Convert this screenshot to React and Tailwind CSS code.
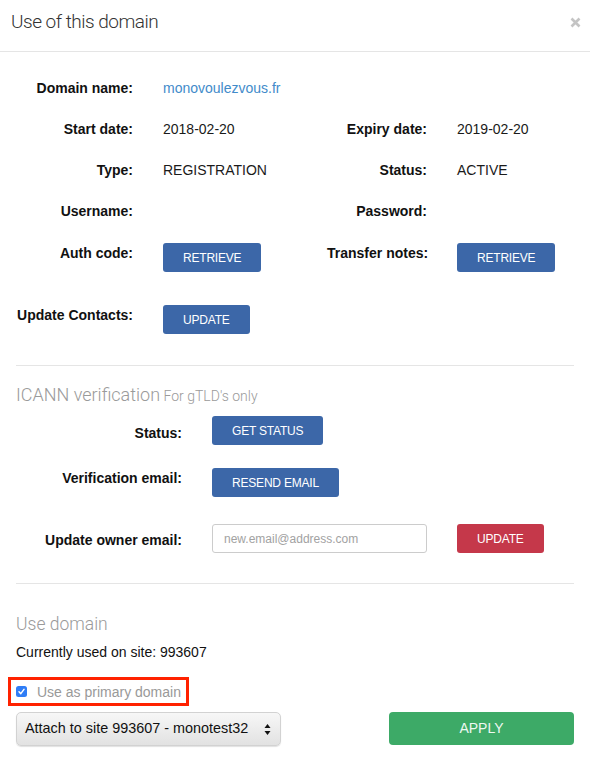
import React from "react";

function Btn({ children, color = "bg-[#3c67a8]" }) {
  return (
    <button
      type="button"
      className={`${color} h-[29px] px-[20px] rounded-[3px] text-white text-[12px] tracking-[-0.2px] leading-none font-['Liberation_Sans',Arial,sans-serif]`}
    >
      {children}
    </button>
  );
}

function Label({ children, className = "" }) {
  return (
    <div className={`text-right font-bold leading-[20px] text-[#111] ${className}`}>{children}</div>
  );
}

export default function App() {
  return (
    <div className="w-[590px] h-[760px] overflow-hidden bg-white text-[14px] text-[#1a1a1a] font-['Liberation_Sans',Arial,sans-serif]">
      {/* Header */}
      <div className="h-[52px] border-b border-[#e5e5e5] flex justify-between items-start pl-[11px] pr-[9px]">
        <div className="pt-[11px] leading-[22px] text-[19px] font-light tracking-[-0.5px] text-[#333] font-['Roboto',sans-serif]">
          Use of this domain
        </div>
        <svg className="mt-[17px]" width="11" height="11" viewBox="0 0 11 11">
          <path d="M1.5 1.5 L9.5 9.5 M9.5 1.5 L1.5 9.5" stroke="#c4c4c4" strokeWidth="2.6" strokeLinecap="butt" />
        </svg>
      </div>

      <div className="px-[16px]">
        {/* Domain details */}
        <div className="pt-[26px] flex flex-col">
          <div className="grid grid-cols-[117px_134px_100px_117px] gap-x-[30px] leading-[20px]">
            <Label>Domain name:</Label>
            <div className="col-span-3 text-[#428bca]">monovoulezvous.fr</div>
          </div>
          <div className="mt-[21px] grid grid-cols-[117px_134px_100px_117px] gap-x-[30px] leading-[20px]">
            <Label>Start date:</Label>
            <div>2018-02-20</div>
            <Label>Expiry date:</Label>
            <div>2019-02-20</div>
          </div>
          <div className="mt-[21px] grid grid-cols-[117px_134px_100px_117px] gap-x-[30px] leading-[20px]">
            <Label>Type:</Label>
            <div>REGISTRATION</div>
            <Label>Status:</Label>
            <div>ACTIVE</div>
          </div>
          <div className="mt-[21px] grid grid-cols-[117px_134px_100px_117px] gap-x-[30px] leading-[20px]">
            <Label>Username:</Label>
            <div></div>
            <Label>Password:</Label>
            <div></div>
          </div>
          <div className="mt-[22px] grid grid-cols-[117px_134px_100px_117px] gap-x-[30px] items-start">
            <Label>Auth code:</Label>
            <div><Btn>RETRIEVE</Btn></div>
            <Label className="whitespace-nowrap">Transfer notes:</Label>
            <div><Btn>RETRIEVE</Btn></div>
          </div>
          <div className="mt-[33px] grid grid-cols-[117px_134px_100px_117px] gap-x-[30px] items-start">
            <Label className="whitespace-nowrap">Update Contacts:</Label>
            <div><Btn>UPDATE</Btn></div>
          </div>
        </div>

        <div className="mt-[31px] border-t border-[#e5e5e5]" />

        {/* ICANN */}
        <div className="mt-[17px] leading-[24px] text-[#9a9a9a] font-['Roboto',sans-serif] font-light whitespace-nowrap">
          <span className="text-[18px]">ICANN verification</span>{" "}
          <span className="text-[14px]">For gTLD's only</span>
        </div>
        <div className="mt-[8px] grid grid-cols-[166px_auto] gap-x-[30px] items-start justify-start">
          <Label className="pt-[7px]">Status:</Label>
          <div><Btn>GET STATUS</Btn></div>
        </div>
        <div className="mt-[23px] grid grid-cols-[166px_auto] gap-x-[30px] items-start justify-start">
          <Label>Verification email:</Label>
          <div><Btn>RESEND EMAIL</Btn></div>
        </div>
        <div className="mt-[27px] grid grid-cols-[166px_auto] gap-x-[30px] items-start justify-start">
          <Label className="pt-[6px]">Update owner email:</Label>
          <div className="flex gap-[30px]">
            <input
              type="text"
              placeholder="new.email@address.com"
              className="w-[215px] h-[29px] border border-[#cccccc] rounded-[3px] px-[11px] text-[12px] text-[#333] placeholder:text-[#a2a2a2] outline-none font-['Liberation_Sans',Arial,sans-serif]"
            />
            <Btn color="bg-[#c5384a]">UPDATE</Btn>
          </div>
        </div>

        <div className="mt-[30px] border-t border-[#e5e5e5]" />

        {/* Use domain */}
        <div className="mt-[28px] leading-[24px] text-[17.5px] text-[#9a9a9a] font-['Roboto',sans-serif] font-light">
          Use domain
        </div>
        <div className="mt-[6px] leading-[20px] text-[#111]">Currently used on site: 993607</div>

        <div className="mt-[15px] -ml-[8px] inline-flex items-center h-[29px] border-[3px] border-[#ff2200] pl-[5px] pr-[5px]">
          <span className="w-[11px] h-[11px] rounded-[2.5px] bg-[#2f7df6] flex items-center justify-center">
            <svg width="9" height="9" viewBox="0 0 9 9">
              <path d="M2 4.8 L3.8 6.6 L7 2.4" fill="none" stroke="white" strokeWidth="1.5" strokeLinecap="round" strokeLinejoin="round" />
            </svg>
          </span>
          <span className="ml-[10px] text-[#999] leading-[20px]">Use as primary domain</span>
        </div>

        <div className="mt-[6px] flex justify-between items-start">
          <div className="w-[265px] h-[34px] rounded-[5px] border border-[#d2d2d2] bg-gradient-to-b from-[#f7f7f7] to-[#e2e2e2] shadow-[0_1px_1px_rgba(0,0,0,0.12)] flex items-center justify-between pl-[8px] pr-[9px]">
            <span className="text-[14.4px] text-[#111] whitespace-nowrap">Attach to site 993607 - monotest32</span>
            <svg width="7" height="13" viewBox="0 0 7 13">
              <path d="M3.5 1 L6.5 5 L0.5 5 Z" fill="#111" />
              <path d="M3.5 12 L6.5 8 L0.5 8 Z" fill="#111" />
            </svg>
          </div>
          <button
            type="button"
            className="w-[185px] h-[33px] rounded-[4px] bg-[#3daa67] text-[#eef8f1] text-[14px] font-['Liberation_Sans',Arial,sans-serif]"
          >
            APPLY
          </button>
        </div>
      </div>
    </div>
  );
}
